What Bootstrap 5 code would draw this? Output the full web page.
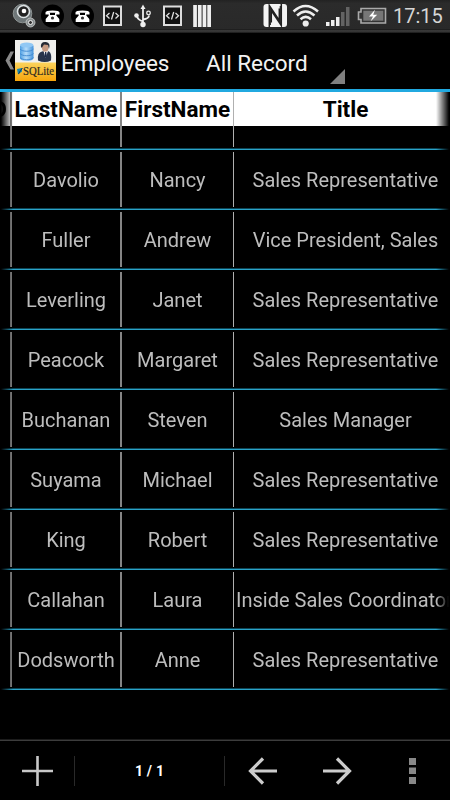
<!DOCTYPE html>
<html lang="en">
<head>
<meta charset="utf-8">
<meta name="viewport" content="width=device-width, initial-scale=1">
<title>Employees</title>
<link rel="stylesheet" href="https://cdn.jsdelivr.net/npm/bootstrap@5.3.0/dist/css/bootstrap.min.css">
<style>
body{background:#000;color:#fff;font-family:Roboto,"Liberation Sans",sans-serif;height:800px;overflow:hidden}
.statusbar{height:33px;background:linear-gradient(#222,#2b2b2b 10%,#292929 88%,#1c1c1c 89%,#3c3c3c 93%,#303030 97%,#111);padding-right:7.5px}
.clock{font-size:20px;line-height:32px;color:#d6d6d6;width:50px;white-space:nowrap}
.actionbar{height:59px;border-bottom:3px solid #21a9e0;padding-left:5px}
.screen-title{font-size:22.500px;line-height:28px;color:#f2f2f2;white-space:nowrap;padding-top:3px}
.title-main{width:109px;margin-left:5px;letter-spacing:-.1px}
.spinner-box{margin-left:36px;width:139px;height:56px;padding-bottom:5px}
.sheet{height:647px;overflow:hidden;-webkit-mask-image:linear-gradient(90deg,transparent 1px,#000 13px,#000 436px,transparent 449px);mask-image:linear-gradient(90deg,transparent 1px,#000 13px,#000 436px,transparent 449px)}
.sheet-row{display:grid;grid-template-columns:10px 110px 113px 217px;height:60px;background:linear-gradient(#0d4556 50%,#2aa3c8 50%) 0 100%/100% 2px no-repeat;padding:2px 0 3px}
.sheet-row>div{border-left:2px solid #858585;text-align:center;white-space:nowrap;overflow:hidden;font-size:20px;line-height:57px;color:#bdbdbd}
.sheet-row>div:first-child{border-left:0}
.sheet-row>div:last-child{border-left:1px solid #b0b0b0;padding-left:7px}
.sheet-row>div.flush{padding-left:2px;text-align:left}
.sheet-row.sheet-head{height:58px;padding:0 0 3px}
.sheet-head>div span{display:block;height:34px;line-height:35px;background:#fff;color:#000;font-weight:700;font-size:22.500px}
.sheet-row.sheet-head>div:last-child{padding-left:0}
.sheet-head>div:last-child span{padding-left:7px}
.sheet-head .id-col span{direction:rtl;padding-right:3px}
.bottombar{height:60px;border-top:1px solid #3c3c3c;box-shadow:0 -1px #1c1c1c}
.page-count{width:151px;height:30px;border-left:1px solid #292929;border-right:1px solid #292929;font-size:14px;letter-spacing:.2px;font-weight:700;line-height:31px;text-align:center}
</style>
<script src="https://cdn.jsdelivr.net/npm/bootstrap@5.3.0/dist/js/bootstrap.bundle.min.js"></script>
</head>
<body class="d-flex flex-column m-0">
<header class="statusbar d-flex flex-shrink-0">
<svg width="393" height="30" viewBox="0 0 393 30" class="flex-shrink-0">
  <!-- speaker -->
  <circle cx="22.500" cy="13.500" r="9.300" fill="#6e7678" stroke="#8f9595"/><circle cx="23.500" cy="11.500" r="6" fill="#222" stroke="#dde3e5" stroke-width="1.600"/><circle cx="24" cy="11" r="2.300" fill="#fff"/>
  <circle cx="30.500" cy="22.500" r="4.500" fill="#8b9192" stroke="#c8caca" stroke-width=".8"/><circle cx="30.500" cy="22.500" r="2" fill="#333" stroke="#eee"/>
  <!-- telephones -->
  <g id="tel"><circle cx="52.500" cy="16" r="11.500" fill="#000"/><path d="M45.500 14.500v-2q0-2 7-2t7 2v2h-4v-1.700h-6v1.700z" fill="#fff"/><path d="M50 13v2h5v-2h1.300v2.600l3 3.400v3h-13.600v-3l3-3.400V13z" fill="#fff"/><circle cx="52.500" cy="18" r="1.600" fill="#333"/></g>
  <use href="#tel" x="30"/>
  <!-- code -->
  <g id="code" fill="none" stroke="#ddd"><rect x="104" y="6.500" width="17" height="18.500" fill="#111" stroke-width="2"/><path d="M109.500 13l-3 2.700 3 2.700M115.500 13l3 2.700-3 2.700M113.700 12l-2.200 7.500" stroke-width="1.300"/></g>
  <use href="#code" x="60"/>
  <!-- usb -->
  <g fill="none" stroke="#eee" stroke-width="1.800"><path d="M143 7v18M143 21.500q-6-2-6-6M143 19.500q6-1 6-4"/><circle cx="148.500" cy="13" r="1.800" stroke-width="1.300"/></g>
  <path d="M140.500 9L143 4.500 145.500 9z" fill="#eee"/><circle cx="136.500" cy="15.500" r="2.300" fill="#eee"/><circle cx="143" cy="24.500" r="2.700" fill="#eee"/>
  <path d="M193.200 5h3.700v22h-3.700zM197.900 5h3.700v22h-3.700zM202.600 5h3.700v22h-3.700zM207.300 5h3.700v22h-3.700z" fill="#eee"/>
  <!-- nfc -->
  <rect x="263.500" y="4" width="23.500" height="23" rx="3" fill="#f4f4f4"/><path d="M269.300 27V5.500L279.300 20.500V8.500M281.300 4V25.500L271.300 10.500V22.500" fill="none" stroke="#222" stroke-width="1.500"/><path d="M270.300 8v17M280.300 6v17" stroke="#222" stroke-width="1.200"/>
  <!-- wifi -->
  <g fill="none" stroke="#eee" stroke-width="2.500"><path d="M293.500 11.500Q305.500 .500 318 11.500M297 15.500q8.500-8 17.500 0M300.500 19.200q5.300-4.600 10.500 0"/></g><circle cx="305.700" cy="23.500" r="3.100" fill="#eee"/>
  <!-- signal -->
  <path d="M326 22h3.500v4H326zM331 20h3.500v6H331zM336 17h3.500v9H336z" fill="#eee"/><path d="M341 12h3.500v14H341zM346 7h3.500v19H346z" fill="#636363"/>
  <!-- battery -->
  <path d="M361 8.500h24.500v14.500H361v-3.500h-2.500v-7.500h2.500z" fill="#333" stroke="#aaa" stroke-width="1.600"/><path d="M363.300 10.700h20v10h-20z" fill="#777"/><path d="M375 9.800l-6 6.700h4l-2.500 5 6.700-6.700h-4z" fill="#fff"/>
</svg>
<span class="clock">17:15</span>
</header>
<nav class="actionbar d-flex align-items-center flex-shrink-0">
<svg width="51" height="42" viewBox="0 0 51 42" class="flex-shrink-0">
  <defs><linearGradient id="gold" x2="0" y2="1"><stop stop-color="#fbd35c"/><stop offset="1" stop-color="#f6a50c"/></linearGradient><linearGradient id="disk"><stop stop-color="#4f9fe2"/><stop offset=".45" stop-color="#b5dcfa"/><stop offset="1" stop-color="#4594dc"/></linearGradient></defs>
  <path d="M9 11.500H5.500L.500 20.500 5.500 29.500H9L4.500 20.500z" fill="#888"/>
  <path d="M10 0h41v41H10z" fill="#f0f0ed"/><path d="M10 22.500h41V41H10z" fill="url(#gold)"/>
  <path d="M15 5.500V18c0 4 13.500 4 13.500 0V5.500z" fill="url(#disk)"/><ellipse cx="21.700" cy="5" rx="6.700" ry="2.600" fill="#91c8f4"/><path d="M15 9c2 3 11.500 3 13.500 0M15 13.500c2 3 11.500 3 13.500 0M15 17.500c2 3 11.500 3 13.500 0" fill="none" stroke="#3e87ce" stroke-width=".9"/>
  <path d="M33 20.500q-1-8 4-9l4-1 3 1q3 2 2 9-6 3-13 0z" fill="#28344b"/><path d="M38.500 11l2 7 2.500-7z" fill="#fff"/><path d="M40 12h1.300l.5 4-1.200 2-.9-2z" fill="#1c2948"/><ellipse cx="40.200" cy="7.500" rx="3.300" ry="4.200" fill="#c79b82"/><path d="M36 7.500q-1-6 5-5.500 5 1 3 7l-1-4-4-.5-2 3z" fill="#252a34"/>
  <path d="M12 29l5-1v3.500l-4 3z" fill="#1687b1"/><path d="M13.500 34q2-4 4-6" stroke="#103a57" fill="none"/>
  <text x="18" y="34.500" font-family="Liberation Serif,serif" font-size="12.500" textLength="31" lengthAdjust="spacingAndGlyphs" fill="#2d2a21" stroke="#2d2a21" stroke-width=".2">SQLite</text>
</svg>
<span class="screen-title title-main">Employees</span>
<div class="spinner-box d-flex justify-content-between align-items-end">
<span class="screen-title align-self-center pt-2">All Record</span>
<svg width="15" height="15" viewBox="0 0 15 15"><path d="M15 0v15H0z" fill="#808080"/></svg>
</div>
</nav>
<main class="sheet flex-shrink-0">
<div class="sheet-row sheet-head"><div class="id-col"><span>ID</span></div><div><span>LastName</span></div><div><span>FirstName</span></div><div><span>Title</span></div></div>
<div class="sheet-row"><div></div><div>Davolio</div><div>Nancy</div><div>Sales Representative</div></div>
<div class="sheet-row"><div></div><div>Fuller</div><div>Andrew</div><div>Vice President, Sales</div></div>
<div class="sheet-row"><div></div><div>Leverling</div><div>Janet</div><div>Sales Representative</div></div>
<div class="sheet-row"><div></div><div>Peacock</div><div>Margaret</div><div>Sales Representative</div></div>
<div class="sheet-row"><div></div><div>Buchanan</div><div>Steven</div><div>Sales Manager</div></div>
<div class="sheet-row"><div></div><div>Suyama</div><div>Michael</div><div>Sales Representative</div></div>
<div class="sheet-row"><div></div><div>King</div><div>Robert</div><div>Sales Representative</div></div>
<div class="sheet-row"><div></div><div>Callahan</div><div>Laura</div><div class="flush">Inside Sales Coordinator</div></div>
<div class="sheet-row"><div></div><div>Dodsworth</div><div>Anne</div><div>Sales Representative</div></div>
</main>
<footer class="bottombar d-flex align-items-center mt-auto flex-shrink-0">
<svg width="74" height="60" viewBox="0 0 74 60"><path d="M37.500 15v30M22 30h31" stroke="#c8c8c8" stroke-width="2.600"/></svg>
<div class="page-count">1 / 1</div>
<svg width="75" height="60" viewBox="225 0 75 60"><path d="M277 30h-27M263 17.500L250.500 30 263 42.500" fill="none" stroke="#ccc" stroke-width="3.200"/></svg>
<svg width="75" height="60" viewBox="300 0 75 60"><path d="M323 30h27M337 17.500L349.500 30 337 42.500" fill="none" stroke="#ccc" stroke-width="3.200"/></svg>
<svg width="75" height="60" viewBox="375 0 75 60"><path d="M409 17h7v7h-7zM409 26.500h7v6.500h-7zM409 36h7v7h-7z" fill="#888"/></svg>
</footer>
</body>
</html>
